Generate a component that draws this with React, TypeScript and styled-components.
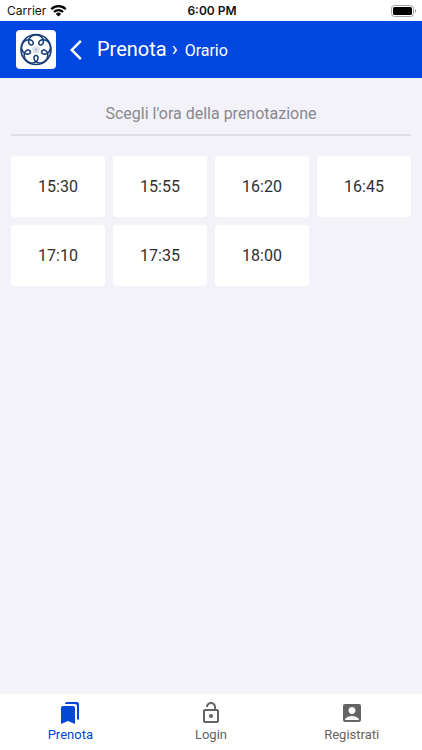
import React from "react";
import styled, { createGlobalStyle } from "styled-components";
import { MdAccountBox, MdArrowBackIosNew, MdBookmarks, MdLockOpen } from "react-icons/md";

const GlobalStyle = createGlobalStyle`
  *, *::before, *::after { box-sizing: border-box; }
  body { margin: 0; background: #f3f2f9; font-family: Roboto, sans-serif; }
  button { font: inherit; border: 0; cursor: pointer; }
`;

const Screen = styled.div`
  min-height: 100vh;
  display: flex;
  flex-direction: column;
`;

const StatusBar = styled.div`
  display: grid;
  grid-template-columns: 1fr auto 1fr;
  align-items: center;
  height: 21px;
  padding: 0 5px 0 7px;
  background: #fff;
  color: #111;
  font: 12px Inter, sans-serif;
`;

const Carrier = styled.span`
  display: flex;
  align-items: center;
  gap: 4px;
`;

const Clock = styled.time`
  font-weight: 600;
`;

const Battery = styled.svg`
  justify-self: end;
`;

const Header = styled.header`
  display: flex;
  align-items: center;
  height: 57px;
  padding: 0 16px;
  background: #0047e1;
  color: #fff;
`;

const LogoTile = styled.div`
  display: flex;
  width: 40px;
  height: 39px;
  border-radius: 4px;
  background: #fff;
`;

const BackButton = styled.button`
  display: flex;
  margin: 0 9px 0 8px;
  padding: 0;
  background: none;
  color: inherit;
`;

const Title = styled.h1`
  margin: 0;
  font-size: 20px;
  font-weight: 400;
  line-height: 24px;
`;

const Crumb = styled.span`
  margin-left: 2px;
  font-size: 16px;
`;

const Content = styled.main`
  flex: 1;
  padding: 21px 11px;
`;

const Prompt = styled.h2`
  margin: 0 0 20px;
  padding: 5px 0 10px;
  border-bottom: 2px solid #dedee6;
  color: #88888e;
  font-size: 16px;
  font-weight: 400;
  line-height: 20px;
  text-align: center;
`;

const SlotGrid = styled.div`
  display: grid;
  grid-template-columns: repeat(4, 1fr);
  gap: 8px;
`;

const Slot = styled.button`
  height: 61px;
  padding: 0;
  border-radius: 4px;
  background: #fff;
  color: #303030;
`;

const SlotTime = styled.time`
  display: block;
  font-size: 16px;
  line-height: 20px;
`;

const TabBar = styled.nav`
  display: grid;
  grid-template-columns: repeat(3, 1fr);
  height: 56px;
  background: #fff;
`;

const Tab = styled.a<{ $active?: boolean }>`
  display: flex;
  flex-direction: column;
  align-items: center;
  padding-top: 7px;
  color: ${({ $active }) => ($active ? "#0047d5" : "#646464")};
  font-size: 13px;
  line-height: 20px;
  text-decoration: none;
`;

const slots = ["15:30", "15:55", "16:20", "16:45", "17:10", "17:35", "18:00"];

const tabs = [
  { label: "Prenota", Icon: MdBookmarks, active: true },
  { label: "Login", Icon: MdLockOpen },
  { label: "Registrati", Icon: MdAccountBox },
];

// A closed curve with five outer lobes and five inner loops.
const rosette =
  Array.from({ length: 181 }, (_, i) => {
    const t = (i * Math.PI) / 90;
    const x = 20 + 10.6 * Math.sin(t) + 4.5 * Math.sin(6 * t);
    const y = 20 - 10.6 * Math.cos(t) - 4.5 * Math.cos(6 * t);
    return `${i ? "L" : "M"}${x.toFixed(2)} ${y.toFixed(2)}`;
  }).join("") + "Z";

const Logo = () => (
  <svg width="40" height="39" viewBox="0 0 40 40" fill="none" role="img" aria-label="Logo">
    <circle cx="20" cy="20" r="15.4" stroke="#183f78" strokeWidth="1.6" />
    <path d={rosette} stroke="#183f78" strokeWidth="1.6" />
    {[0, 72, 144, 216, 288].map((angle) => (
      <path key={angle} d="M20 20L18.8 17.5L20 16L21.2 17.5Z" stroke="#a9b9cd" strokeWidth="0.6" transform={`rotate(${angle} 20 20)`} />
    ))}
  </svg>
);

export default function App() {
  return (
    <Screen>
      <GlobalStyle />
      <StatusBar>
        <Carrier>
          Carrier
          <svg width="17" height="12" viewBox="0 0 17 12" aria-hidden="true">
            <g fill="none" stroke="#000" strokeWidth="2.3">
              <path d="M1.3 4.2a10.2 10.2 0 0 1 14.4 0" />
              <path d="M4 7a6.4 6.4 0 0 1 9 0" />
            </g>
            <path d="M5.9 8.9a3.7 3.7 0 0 1 5.2 0L8.5 11.6Z" />
          </svg>
        </Carrier>
        <Clock>6:00 PM</Clock>
        <Battery width="26" height="12" viewBox="0 0 26 12" aria-label="Battery full">
          <rect x="0.5" y="0.5" width="22" height="11" rx="3" fill="none" stroke="#a4a4a4" />
          <rect x="2" y="2" width="19" height="8" rx="1.5" />
          <path d="M24 4v4a2.2 2.2 0 0 0 0-4Z" fill="#a4a4a4" />
        </Battery>
      </StatusBar>
      <Header>
        <LogoTile><Logo /></LogoTile>
        <BackButton aria-label="Indietro"><MdArrowBackIosNew size={24} /></BackButton>
        <Title>Prenota › <Crumb>Orario</Crumb></Title>
      </Header>
      <Content>
        <Prompt>Scegli l'ora della prenotazione</Prompt>
        <SlotGrid>
          {slots.map((slot) => (
            <Slot key={slot}><SlotTime>{slot}</SlotTime></Slot>
          ))}
        </SlotGrid>
      </Content>
      <TabBar>
        {tabs.map(({ label, Icon, active }) => (
          <Tab key={label} href={`#${label.toLowerCase()}`} $active={active} aria-current={active ? "page" : undefined}>
            <Icon size={24} />
            {label}
          </Tab>
        ))}
      </TabBar>
    </Screen>
  );
}
